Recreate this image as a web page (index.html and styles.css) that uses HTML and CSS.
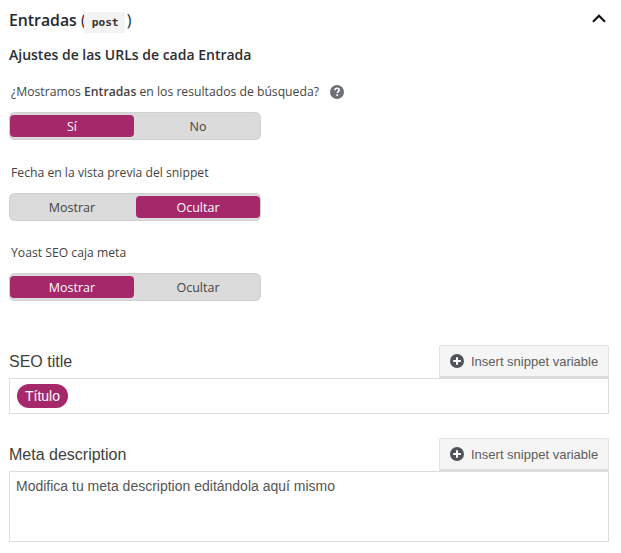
FILE: index.html
```html
<!DOCTYPE html>
<html lang="es">
<head>
<meta charset="utf-8">
<title>Entradas</title>
<link rel="stylesheet" href="styles.css">
</head>
<body>
<main class="panel">
  <header class="panel-head">
    <h2 class="panel-title">Entradas <span class="paren">(</span> <code class="tag">post</code> <span class="paren">)</span></h2>
    <svg class="chevron" width="14" height="9" viewBox="0 0 14 9"><path d="M1 7.8 7 1.8l6 6" fill="none" stroke="#111" stroke-width="2.2"/></svg>
  </header>
  <h3 class="subhead">Ajustes de las URLs de cada Entrada</h3>

  <div class="field field-first">
    <div class="label-row">
      <span class="label">¿Mostramos <strong>Entradas</strong> en los resultados de búsqueda?</span>
      <svg class="help" width="14" height="14" viewBox="0 0 14 14"><circle cx="7" cy="7" r="7" fill="#6d7077"/><path d="M4.9 5.3C5 4 5.9 3.3 7.1 3.3c1.2 0 2.1.7 2.1 1.8 0 1.6-1.9 1.6-1.9 3" fill="none" stroke="#fff" stroke-width="1.6"/><rect x="6.3" y="9.2" width="1.8" height="1.7" fill="#fff"/></svg>
    </div>
    <div class="toggle"><span class="opt on">Sí</span><span class="opt">No</span></div>
  </div>

  <div class="field field-second">
    <div class="label-row"><span class="label">Fecha en la vista previa del snippet</span></div>
    <div class="toggle"><span class="opt">Mostrar</span><span class="opt on">Ocultar</span></div>
  </div>

  <div class="field field-third">
    <div class="label-row"><span class="label">Yoast SEO caja meta</span></div>
    <div class="toggle"><span class="opt on">Mostrar</span><span class="opt">Ocultar</span></div>
  </div>

  <section class="editor editor-title">
    <div class="editor-head">
      <span class="editor-label">SEO title</span>
      <button class="insert" type="button">
        <svg width="14" height="14" viewBox="0 0 14 14"><circle cx="7" cy="7" r="7" fill="#50545a"/><path d="M7 3.2v7.6M3.2 7h7.6" stroke="#fff" stroke-width="2"/></svg>
        Insert snippet variable
      </button>
    </div>
    <div class="input input-line"><span class="pill">Título</span></div>
  </section>

  <section class="editor editor-meta">
    <div class="editor-head">
      <span class="editor-label">Meta description</span>
      <button class="insert" type="button">
        <svg width="14" height="14" viewBox="0 0 14 14"><circle cx="7" cy="7" r="7" fill="#50545a"/><path d="M7 3.2v7.6M3.2 7h7.6" stroke="#fff" stroke-width="2"/></svg>
        Insert snippet variable
      </button>
    </div>
    <div class="input input-area">Modifica tu meta description editándola aquí mismo</div>
  </section>
</main>
</body>
</html>
```

FILE: styles.css
```css
* { box-sizing: border-box; }
html, body { margin: 0; background: #fff; }
body { width: 621px; height: 553px; overflow: hidden; font-family: "Open Sans", sans-serif; color: #444; }
.panel { padding: 9px 12px 0 9px; }
.panel-head { display: flex; justify-content: space-between; align-items: center; height: 24px; padding-right: 3px; }
.panel-title { margin: 0; font-size: 15.8px; line-height: 24px; font-weight: 600; color: #23282d; }
.paren { font-weight: 400; }
.tag { font-family: "DejaVu Sans Mono", monospace; font-size: 11.2px; font-weight: 700; background: #f3f3f3; padding: 4px 6px 4px 8px; color: #333; margin: 0 -2px 0 -6px; }
.chevron { display: block; margin-top: -5px; }
.subhead { margin: 12px 0 0; font-size: 14px; line-height: 20px; font-weight: 600; color: #2a2f34; }
.label-row { display: flex; align-items: center; gap: 11px; height: 18px; padding-left: 2px; }
.label { font-size: 12.2px; line-height: 18px; color: #444; }
.label strong { font-weight: 600; }
.field-first { margin-top: 18px; }
.field-second { margin-top: 24px; }
.field-third { margin-top: 23px; }
.toggle { display: flex; gap: 2px; width: 252px; height: 28px; margin-top: 11px; padding: 3px 1px; background: #dbdbdb; border-radius: 6px; box-shadow: inset 0 0 0 1px #d0d0d0; }
.opt { flex: 1; display: flex; align-items: center; justify-content: center; font-size: 12.5px; color: #444; border-radius: 4px; }
.opt.on { background: #a4286a; color: #fff; }
.editor-title { margin-top: 44px; }
.editor-meta { margin-top: 24px; }
.editor-head { display: flex; justify-content: space-between; align-items: flex-end; height: 33px; }
.editor-label { font-family: "Liberation Sans", Arial, sans-serif; font-size: 16px; line-height: 18px; padding-bottom: 7px; color: #404040; }
.insert { display: flex; align-items: center; gap: 7px; width: 170px; height: 33px; padding: 0 0 0 10px; background: #f5f5f5; border: 1px solid #e4e4e4; border-bottom: 2px solid #dcdcdc; border-radius: 2px 2px 0 0; font-family: "Liberation Sans", Arial, sans-serif; font-size: 13px; color: #5c5c5c; }
.input { border: 1px solid #ddd; background: #fff; font-family: "Liberation Sans", Arial, sans-serif; }
.input-line { height: 36px; padding: 5px 7px; }
.input-area { height: 71px; padding: 6px 6px; font-size: 14px; line-height: 17px; color: #555; }
.pill { display: inline-block; height: 24px; padding: 0 8px; border-radius: 12px; background: #a4286a; color: #fff; font-size: 14px; line-height: 24px; }
```
